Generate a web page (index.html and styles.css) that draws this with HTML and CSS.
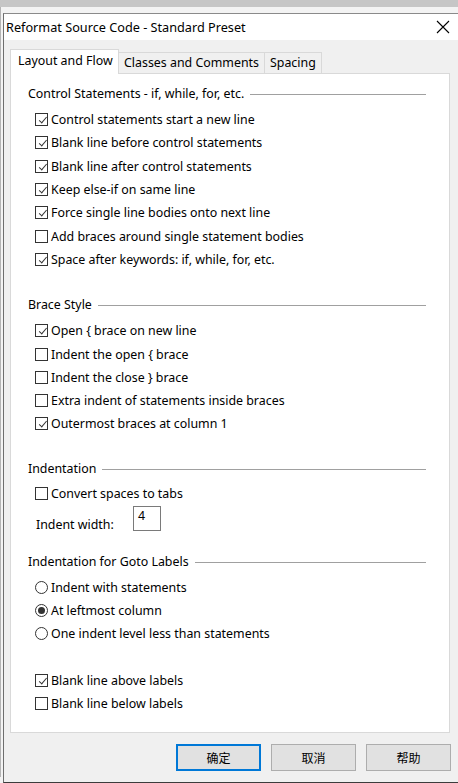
FILE: index.html
```html
<!DOCTYPE html>
<html>
<head>
<meta charset="utf-8">
<link rel="stylesheet" href="styles.css">
</head>
<body>
<div class="topstrip"></div>
<div class="desk">
  <div class="dialog">
    <div class="titlebar">
      <span class="title">Reformat Source Code - Standard Preset</span>
      <svg class="close" width="14" height="14" viewBox="0 0 14 14"><path d="M1 1 L13 13 M13 1 L1 13" stroke="#000" stroke-width="1.1" fill="none"/></svg>
    </div>
    <div class="body">
      <div class="tabs">
        <div class="tab active">Layout and Flow</div>
        <div class="tab">Classes and Comments</div>
        <div class="tab">Spacing</div>
      </div>
      <div class="panel">
        <div class="heading"><span>Control Statements - if, while, for, etc.</span><i></i></div>
        <div class="group">
          <div class="row"><span class="cb on"></span>Control statements start a new line</div>
          <div class="row"><span class="cb on"></span>Blank line before control statements</div>
          <div class="row"><span class="cb on"></span>Blank line after control statements</div>
          <div class="row"><span class="cb on"></span>Keep else-if on same line</div>
          <div class="row"><span class="cb on"></span>Force single line bodies onto next line</div>
          <div class="row"><span class="cb"></span>Add braces around single statement bodies</div>
          <div class="row"><span class="cb on"></span>Space after keywords: if, while, for, etc.</div>
        </div>
        <div class="heading sec2"><span>Brace Style</span><i></i></div>
        <div class="group">
          <div class="row"><span class="cb on"></span>Open { brace on new line</div>
          <div class="row"><span class="cb"></span>Indent the open { brace</div>
          <div class="row"><span class="cb"></span>Indent the close } brace</div>
          <div class="row"><span class="cb"></span>Extra indent of statements inside braces</div>
          <div class="row"><span class="cb on"></span>Outermost braces at column 1</div>
        </div>
        <div class="heading sec3"><span>Indentation</span><i></i></div>
        <div class="group tight">
          <div class="row"><span class="cb"></span>Convert spaces to tabs</div>
          <div class="widthrow"><span class="wlabel">Indent width:</span><span class="num">4</span></div>
        </div>
        <div class="heading sec4"><span>Indentation for Goto Labels</span><i></i></div>
        <div class="group tight">
          <div class="row"><span class="rb"></span>Indent with statements</div>
          <div class="row"><span class="rb on"></span>At leftmost column</div>
          <div class="row"><span class="rb"></span>One indent level less than statements</div>
        </div>
        <div class="group sec5">
          <div class="row"><span class="cb on"></span>Blank line above labels</div>
          <div class="row"><span class="cb"></span>Blank line below labels</div>
        </div>
      </div>
      <div class="buttons">
        <div class="btn default">确定</div>
        <div class="btn">取消</div>
        <div class="btn">帮助</div>
      </div>
    </div>
  </div>
</div>
</body>
</html>
```

FILE: styles.css
```css
html, body {
  margin: 0;
  padding: 0;
  width: 458px;
  height: 783px;
  overflow: hidden;
  background: #f3f3f3;
  font-family: "Noto Sans", "Noto Sans CJK SC", sans-serif;
  font-size: 12.4px;
  color: #000;
}
.topstrip {
  height: 7px;
  background: #c6c6c6;
}
.desk {
  padding-top: 6px;
  padding-left: 2px;
  border-left: 1px solid #b4b4b4;
  height: 770px;
  box-sizing: border-box;
}
.dialog {
  width: 470px;
  height: 768px;
  border-top: 1px solid #8a8a8a;
  border-left: 1px solid #6e6e6e;
  border-bottom: 1px solid #3c3c3c;
  background: #f0f0f0;
  display: flex;
  flex-direction: column;
}
.titlebar {
  height: 26px;
  background: #fff;
  display: flex;
  align-items: center;
  padding-left: 2px;
  width: 455px;
  box-sizing: border-box;
  padding-right: 9px;
}
.title {
  flex: 1;
  font-size: 12.7px;
  margin-top: -1px;
}
.close {
  display: block;
  margin-top: -1px;
}
.body {
  padding: 9px 0 0 6px;
  width: 447px;
}
.tabs {
  display: flex;
  align-items: flex-end;
  height: 24px;
  position: relative;
  z-index: 2;
}
.tab {
  height: 21px;
  box-sizing: border-box;
  border: 1px solid #d9d9d9;
  border-bottom: none;
  border-left: none;
  padding: 0 5px;
  line-height: 20px;
  background: #f0f0f0;
  white-space: nowrap;
}
.tab.active {
  height: 25px;
  margin-bottom: -1px;
  background: #fff;
  border-left: 1px solid #d9d9d9;
  padding: 0 4px 0 7px;
  line-height: 22px;
  width: 109px;
}
.panel {
  height: 660px;
  width: 440px;
  box-sizing: border-box;
  background: #fff;
  border: 1px solid #d9d9d9;
  padding: 10px 23px 0 17px;
  display: flex;
  flex-direction: column;
}
.heading {
  height: 20px;
  display: flex;
  align-items: center;
  white-space: nowrap;
}
.heading span {
  margin-top: -1px;
}
.heading i {
  flex: 1;
  height: 1px;
  background: #a0a0a0;
  margin-left: 6px;
}
.group {
  padding-left: 7px;
  margin-top: 4px;
}
.group.tight {
  margin-top: 3px;
}
.row {
  height: 23.3px;
  display: flex;
  align-items: center;
  white-space: nowrap;
}
.cb, .rb {
  width: 13px;
  height: 13px;
  box-sizing: border-box;
  border: 1px solid #333;
  background: #fff;
  margin-right: 3px;
  flex: none;
  position: relative;
}
.cb.on::after {
  content: "";
  position: absolute;
  left: 2px;
  top: 1px;
  width: 7px;
  height: 3px;
  border-left: 1px solid #333;
  border-bottom: 1px solid #333;
  transform: rotate(-50deg) translate(-1px, 2px);
}
.rb {
  border-radius: 50%;
}
.rb.on::after {
  content: "";
  position: absolute;
  left: 2px;
  top: 2px;
  width: 7px;
  height: 7px;
  border-radius: 50%;
  background: #333;
}
.sec2 { margin-top: 24px; }
.sec3 { margin-top: 23.5px; }
.sec4 { margin-top: 21px; }
.sec5 { margin-top: 23.3px; }
.widthrow {
  display: flex;
  align-items: flex-start;
  height: 25px;
  margin-top: 1px;
}
.wlabel {
  width: 97px;
  padding-left: 1px;
  margin-top: 12px;
  line-height: 14px;
}
.num {
  width: 28px;
  height: 25px;
  box-sizing: border-box;
  border: 1px solid #7a7a7a;
  padding: 2px 0 0 4px;
  line-height: 14px;
}
.buttons {
  display: flex;
  justify-content: flex-end;
  gap: 10px;
  margin-top: 11px;
  padding-right: 6px;
}
.btn {
  width: 85px;
  height: 27px;
  box-sizing: border-box;
  border: 1px solid #adadad;
  background: #e1e1e1;
  display: flex;
  align-items: center;
  justify-content: center;
  font-family: "Noto Sans CJK SC", sans-serif;
  font-size: 12px;
}
.btn.default {
  border: 2px solid #0078d7;
}
```
